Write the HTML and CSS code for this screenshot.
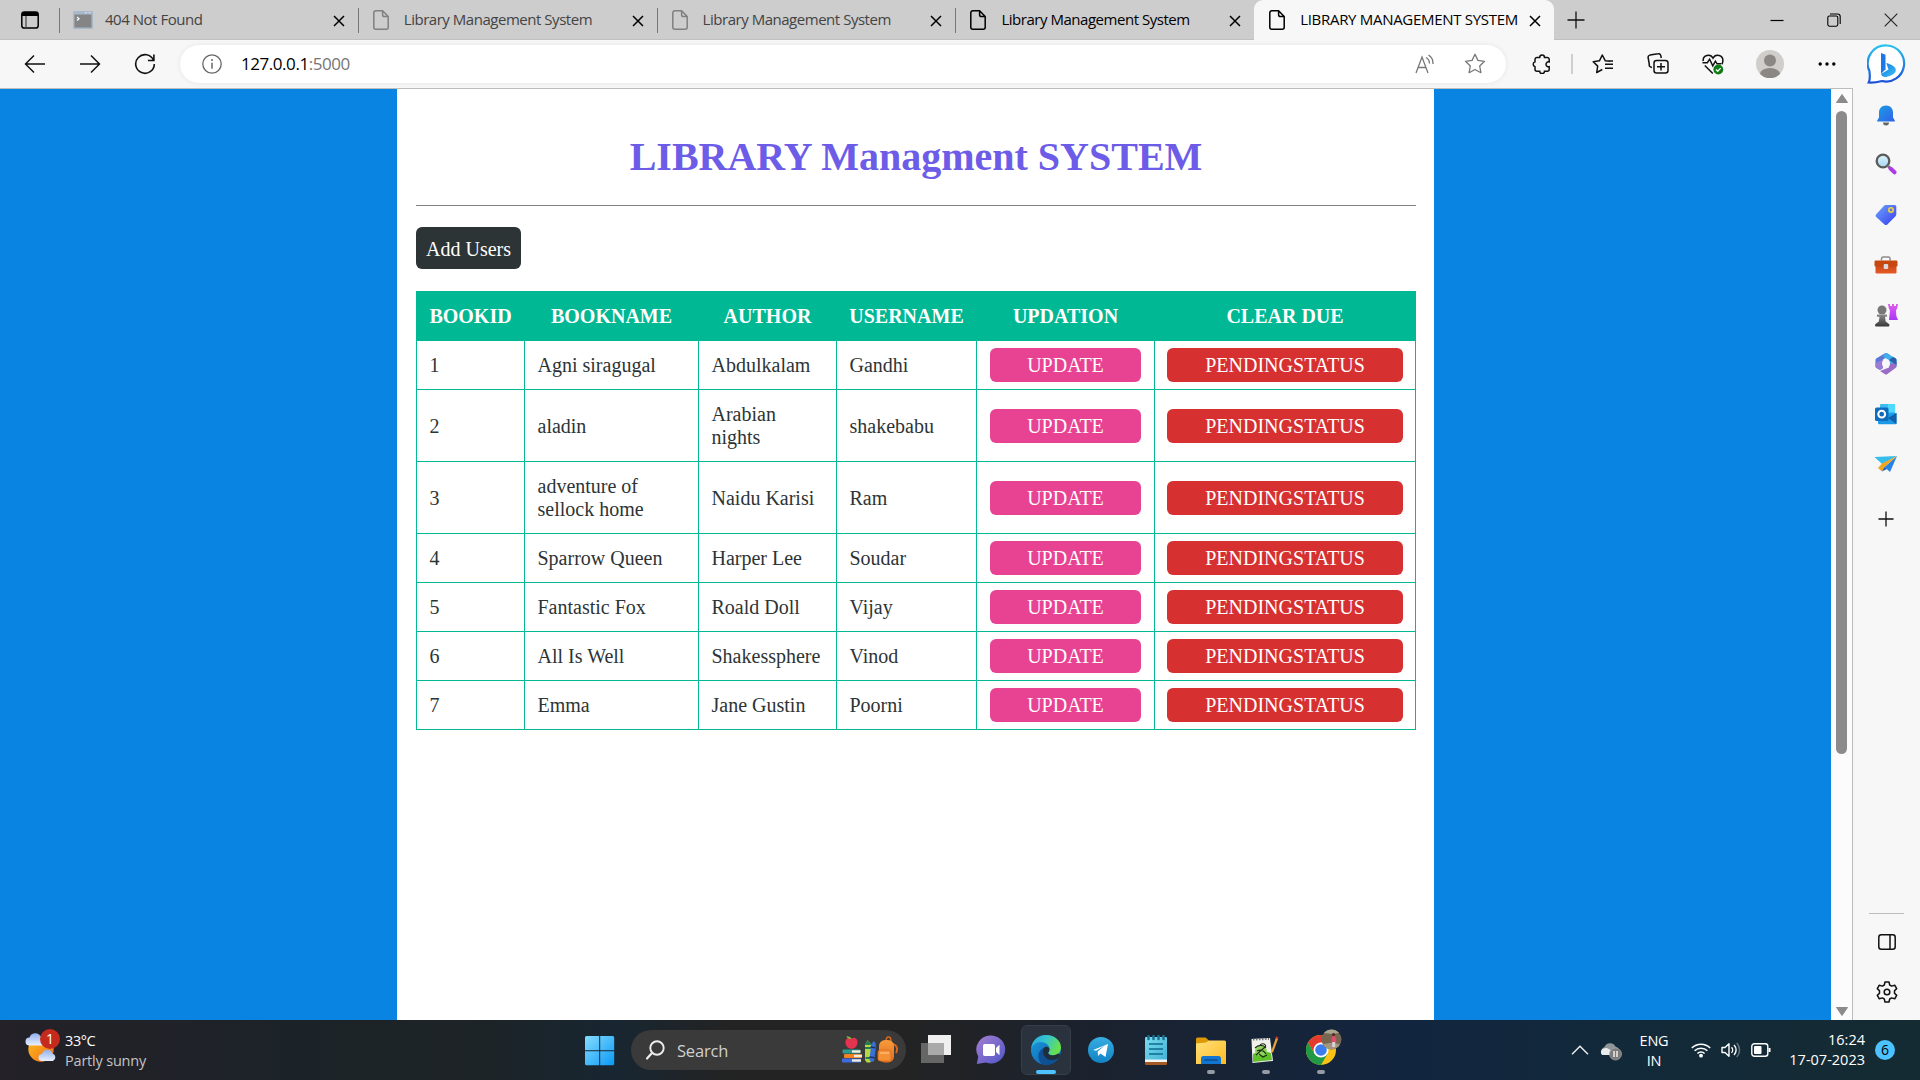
FILE: index.html
```html
<!DOCTYPE html>
<html lang="en">
<head>
<meta charset="utf-8">
<title>LIBRARY MANAGEMENT SYSTEM</title>
<link rel="stylesheet" href="styles.css">
</head>
<body>
<svg class="defs" width="0" height="0">
  <defs>
    <linearGradient id="gBell" x1="0" y1="0" x2="1" y2="1"><stop offset="0" stop-color="#1b9de2"/><stop offset="1" stop-color="#2f62ea"/></linearGradient>
    <linearGradient id="gTag" x1="0" y1="0" x2="1" y2="1"><stop offset="0" stop-color="#6aa5fb"/><stop offset="1" stop-color="#3a3df0"/></linearGradient>
    <linearGradient id="gBox" x1="0" y1="0" x2="0" y2="1"><stop offset="0" stop-color="#c4420f"/><stop offset="1" stop-color="#e65a2a"/></linearGradient>
    <linearGradient id="gPawn" x1="0" y1="0" x2="0" y2="1"><stop offset="0" stop-color="#8a8a8a"/><stop offset="1" stop-color="#383838"/></linearGradient>
    <linearGradient id="gRook" x1="0" y1="0" x2="0" y2="1"><stop offset="0" stop-color="#e35cf0"/><stop offset="1" stop-color="#a838f5"/></linearGradient>
    <linearGradient id="gBing" x1="0" y1="0" x2="0" y2="1"><stop offset="0" stop-color="#2bc3ee"/><stop offset="1" stop-color="#1b4fd8"/></linearGradient>
    <linearGradient id="gB" x1="0" y1="0" x2="1" y2="1"><stop offset="0" stop-color="#1a6fe8"/><stop offset="1" stop-color="#37c6ee"/></linearGradient>
    <linearGradient id="gWin" x1="0" y1="0" x2="1" y2="1"><stop offset="0" stop-color="#85dcff"/><stop offset="1" stop-color="#0a99f5"/></linearGradient>
    <linearGradient id="gSun" x1="0" y1="0" x2="1" y2="1"><stop offset="0" stop-color="#fcc21b"/><stop offset="1" stop-color="#f56a1c"/></linearGradient>
    <linearGradient id="gCloud" x1="0" y1="0" x2="0" y2="1"><stop offset="0" stop-color="#8fb1ef"/><stop offset="1" stop-color="#e9f0fd"/></linearGradient>
    <linearGradient id="gChat" x1="0" y1="0" x2="1" y2="1"><stop offset="0" stop-color="#a67fd0"/><stop offset="1" stop-color="#4e55c8"/></linearGradient>
    <linearGradient id="gEdgeTop" x1="0" y1="0" x2="1" y2="0.4"><stop offset="0" stop-color="#2aa4e0"/><stop offset=".5" stop-color="#35c4cf"/><stop offset="1" stop-color="#66e04f"/></linearGradient>
    <linearGradient id="gEdgeBody" x1="0" y1="0" x2="1" y2="1"><stop offset="0" stop-color="#1b9de0"/><stop offset="1" stop-color="#0c59a4"/></linearGradient>
    <linearGradient id="gTel" x1="0" y1="0" x2="0" y2="1"><stop offset="0" stop-color="#37aee2"/><stop offset="1" stop-color="#1282c4"/></linearGradient>
    <linearGradient id="gNote" x1="0" y1="0" x2="1" y2="1"><stop offset="0" stop-color="#7bdcf0"/><stop offset="1" stop-color="#3fb0d4"/></linearGradient>
    <linearGradient id="gFold" x1="0" y1="0" x2="1" y2="1"><stop offset="0" stop-color="#ffe07a"/><stop offset="1" stop-color="#fdbb22"/></linearGradient>
    <linearGradient id="gBag" x1="0" y1="0" x2="0" y2="1"><stop offset="0" stop-color="#f79a3c"/><stop offset="1" stop-color="#e36f1e"/></linearGradient>
    <linearGradient id="gLens" x1="0" y1="0" x2="0" y2="1"><stop offset="0" stop-color="#dff2fc"/><stop offset="1" stop-color="#a5d6f2"/></linearGradient>
  </defs>
  <symbol id="page" viewBox="0 0 16 20"><path d="M3 .8h6.6l5.6 5.7v10.7a2 2 0 0 1-2 2H2.800a2 2 0 0 1-2-2V2.800a2 2 0 0 1 2-2zM9.600 .8v3.900a1.800 1.800 0 0 0 1.800 1.800h3.800" fill="none" stroke="currentColor" stroke-width="1.500" stroke-linejoin="round"/></symbol>
  <symbol id="cross" viewBox="0 0 12 12"><path d="M1 1l10 10M11 1L1 11" fill="none" stroke="currentColor" stroke-width="1.500"/></symbol>
</svg>

<div class="screen">
  <header class="tabbar">
    <div class="tab-actions"><svg width="18" height="18" viewBox="0 0 18 18"><rect x=".8" y="1" width="16.400" height="16" rx="2.600" fill="none" stroke="#000" stroke-width="1.500"/><path d="M1 5V3.200A2.200 2.200 0 0 1 3.200 1h11.600A2.200 2.200 0 0 1 17 3.200V5z"/><path d="M5 5v12" stroke="#444" stroke-width="1.200"/></svg></div>
    <div class="tab dim">
      <span class="fav"><svg width="20" height="18" viewBox="0 0 20 18"><rect width="20" height="18" rx="1" fill="#a9b9cc"/><rect x="1.500" y="3.500" width="17" height="13" fill="#858585"/><path d="M4 6l2 1.800L4 9.600" fill="none" stroke="#fff" stroke-width="1.300"/><path d="M12 1.700h2M15.500 1.700h2" stroke="#dce6f2"/></svg></span>
      <span class="tab-title">404 Not Found</span><svg class="x" width="12" height="12"><use href="#cross"/></svg>
    </div>
    <div class="tab dim"><span class="fav"><svg width="16" height="20"><use href="#page"/></svg></span><span class="tab-title">Library Management System</span><svg class="x" width="12" height="12"><use href="#cross"/></svg></div>
    <div class="tab dim"><span class="fav"><svg width="16" height="20"><use href="#page"/></svg></span><span class="tab-title">Library Management System</span><svg class="x" width="12" height="12"><use href="#cross"/></svg></div>
    <div class="tab"><span class="fav"><svg width="16" height="20"><use href="#page"/></svg></span><span class="tab-title">Library Management System</span><svg class="x" width="12" height="12"><use href="#cross"/></svg></div>
    <div class="tab active"><span class="fav"><svg width="16" height="20"><use href="#page"/></svg></span><span class="tab-title caps">LIBRARY MANAGEMENT SYSTEM</span><svg class="x" width="12" height="12"><use href="#cross"/></svg></div>
    <div class="newtab"><svg width="18" height="18" viewBox="0 0 18 18"><path d="M9 .5v17M.5 9h17" stroke="#111" stroke-width="1.300"/></svg></div>
    <div class="win-controls">
      <span><svg width="14" height="14" viewBox="0 0 14 14"><path d="M.5 7.500h13" stroke="#000" stroke-width="1.200"/></svg></span>
      <span><svg width="14" height="14" viewBox="0 0 14 14"><rect x=".8" y="3" width="10" height="10.200" rx="1.600" fill="none" stroke="#000" stroke-width="1.100"/><path d="M3 1h7.500a2.700 2.700 0 0 1 2.700 2.700V11" fill="none" stroke="#000" stroke-width="1.100"/></svg></span>
      <span><svg width="14" height="14" viewBox="0 0 14 14"><path d="M.7.7l12.600 12.600M13.300.7L.7 13.300" stroke="#222" stroke-width="1.100"/></svg></span>
    </div>
  </header>

  <div class="toolbar">
    <div class="nav">
      <span><svg width="22" height="20" viewBox="0 0 22 20"><path d="M10 1.500L1.500 10l8.500 8.500M1.500 10H21" fill="none" stroke="#111" stroke-width="1.500"/></svg></span>
      <span><svg width="22" height="20" viewBox="0 0 22 20"><path d="M12 1.500l8.500 8.500-8.500 8.500M20.500 10H1" fill="none" stroke="#111" stroke-width="1.500"/></svg></span>
      <span><svg width="22" height="22" viewBox="0 0 22 22"><path d="M19.500 7.200A9.300 9.300 0 1 0 20.300 11M19.900 1.500v6h-6" fill="none" stroke="#111" stroke-width="1.600"/></svg></span>
    </div>
    <div class="address">
      <svg width="20" height="20" viewBox="0 0 20 20"><circle cx="10" cy="10" r="9.200" fill="none" stroke="#666" stroke-width="1.300"/><path d="M10 8.700v6" stroke="#666" stroke-width="1.500"/><circle cx="10" cy="6" r="1" fill="#666"/></svg>
      <span class="url">127.0.0.1<i>:5000</i></span>
      <span class="read"><svg width="20" height="20" viewBox="0 0 20 20"><path d="M1 19L7 3l6 16M3.200 13.500h7.600" fill="none" stroke="#777" stroke-width="1.300"/><path d="M11 3.500a7 7 0 0 1 3.500 6M13.500 1a10 10 0 0 1 4.500 9" fill="none" stroke="#777" stroke-width="1.300"/></svg></span>
      <span class="star"><svg width="22" height="21" viewBox="0 0 22 21"><path d="M11 1.300l2.900 6.100 6.600.9-4.800 4.700 1.200 6.700-5.900-3.200-5.900 3.200 1.200-6.700L1.500 8.300l6.600-.9z" fill="none" stroke="#777" stroke-width="1.300" stroke-linejoin="round"/></svg></span>
    </div>
    <div class="tools">
      <span><svg width="20" height="20" viewBox="0 0 20 20"><path d="M5 3.400h2.700a2.400 2.400 0 0 1 4.800 0h2.700a2 2 0 0 1 2 2v2.500a2.500 2.500 0 1 0 0 4.800v2.500a2 2 0 0 1-2 2h-2.700a2.400 2.400 0 0 1-4.800 0H5a2 2 0 0 1-2-2v-2.500a2.500 2.500 0 0 1 0-4.800V5.400a2 2 0 0 1 2-2z" fill="none" stroke="#111" stroke-width="1.500"/></svg></span>
      <b class="rule"></b>
      <span><svg width="22" height="20" viewBox="0 0 22 20"><path d="M18 7.300l-4.800-.6L10.300 1 7.400 6.800 1.200 7.700l4.500 4.400-1 6.400 5.600-3M13 10.200h8M13 14.300h8M15 7h6" fill="none" stroke="#111" stroke-width="1.500" stroke-linejoin="round"/></svg></span>
      <span><svg width="22" height="21" viewBox="0 0 22 21"><rect x="7" y="7.500" width="14" height="12.500" rx="2.500" fill="none" stroke="#111" stroke-width="1.500"/><path d="M14 10v7.500M10 13.800h8M5 14.500l-1.200-.4a2.300 2.300 0 0 1-1.500-2.800L1.200 5a2.400 2.400 0 0 1 1.700-2.900L11 .8a2.400 2.400 0 0 1 2.800 1.800L14.300 5" fill="none" stroke="#111" stroke-width="1.500"/></svg></span>
      <span><svg width="22" height="22" viewBox="0 0 22 22"><path d="M1.200 8.200a5.200 5.200 0 0 1 9.800-3 5.200 5.200 0 0 1 9.800 3c0 1-.3 2-1 3M2.800 12.500l8 8M.5 9.700h4.800l2.300-3.500 3.200 6.600 2.600-4.600 1.700 2.600h4" fill="none" stroke="#111" stroke-width="1.500"/><circle cx="16.300" cy="16.500" r="4.900" fill="#0f7b17"/><path d="M14 16.500l1.700 1.800 3-3.200" fill="none" stroke="#fff" stroke-width="1.300"/></svg></span>
      <span class="avatar"><svg width="28" height="28" viewBox="0 0 28 28"><circle cx="14" cy="14" r="14" fill="#d0cecb"/><circle cx="14" cy="10.500" r="6" fill="#8a8784"/><path d="M4 24a10 6 0 0 1 20 0 14 14 0 0 1-20 0z" fill="#8a8784"/></svg></span>
      <span class="more"><svg width="18" height="4" viewBox="0 0 18 4"><circle cx="2.200" cy="2" r="1.700"/><circle cx="9" cy="2" r="1.700"/><circle cx="15.800" cy="2" r="1.700"/></svg></span>
      <span class="bing"><svg width="40" height="40" viewBox="0 0 40 40"><path d="M20 1.500A18 18 0 1 1 15 37c-4 1-8 2-13.300 1.500C3.500 35 3 32 2.400 27A18 18 0 0 1 20 1.500z" fill="#fff" stroke="url(#gBing)" stroke-width="2.200"/><path d="M14 9l4.500 1.800v14.500L14 30z" fill="#1c77ea"/><path d="M14 30l7.500-4.500-2.200-6.500c5 1.500 9.500 3.500 9.500 7 0 4-5 5.700-9.500 7-2.800.4-4.800-.8-5.300-3z" fill="url(#gB)"/></svg></span>
    </div>
  </div>

  <div class="middle">
    <main class="viewport">
      <div class="container">
        <h1>LIBRARY Managment SYSTEM</h1>
        <hr>
        <a class="btn add">Add Users</a>
        <table>
          <colgroup><col class="c1"><col class="c2"><col class="c3"><col class="c4"><col class="c5"><col class="c6"></colgroup>
          <thead><tr><th>BOOKID</th><th>BOOKNAME</th><th>AUTHOR</th><th>USERNAME</th><th>UPDATION</th><th>CLEAR DUE</th></tr></thead>
          <tbody>
            <tr><td>1</td><td>Agni siragugal</td><td>Abdulkalam</td><td>Gandhi</td><td class="act"><a class="btn edit">UPDATE</a></td><td class="act"><a class="btn due">PENDINGSTATUS</a></td></tr>
            <tr><td>2</td><td>aladin</td><td>Arabian<br>nights</td><td>shakebabu</td><td class="act"><a class="btn edit">UPDATE</a></td><td class="act"><a class="btn due">PENDINGSTATUS</a></td></tr>
            <tr><td>3</td><td>adventure of<br>sellock home</td><td>Naidu Karisi</td><td>Ram</td><td class="act"><a class="btn edit">UPDATE</a></td><td class="act"><a class="btn due">PENDINGSTATUS</a></td></tr>
            <tr><td>4</td><td>Sparrow Queen</td><td>Harper Lee</td><td>Soudar</td><td class="act"><a class="btn edit">UPDATE</a></td><td class="act"><a class="btn due">PENDINGSTATUS</a></td></tr>
            <tr><td>5</td><td>Fantastic Fox</td><td>Roald Doll</td><td>Vijay</td><td class="act"><a class="btn edit">UPDATE</a></td><td class="act"><a class="btn due">PENDINGSTATUS</a></td></tr>
            <tr><td>6</td><td>All Is Well</td><td>Shakessphere</td><td>Vinod</td><td class="act"><a class="btn edit">UPDATE</a></td><td class="act"><a class="btn due">PENDINGSTATUS</a></td></tr>
            <tr><td>7</td><td>Emma</td><td>Jane Gustin</td><td>Poorni</td><td class="act"><a class="btn edit">UPDATE</a></td><td class="act"><a class="btn due">PENDINGSTATUS</a></td></tr>
          </tbody>
        </table>
      </div>
    </main>
    <div class="scrollbar">
      <svg width="12" height="9" viewBox="0 0 12 9"><path d="M6 .5L11.500 8.500H.5z" fill="#8b8b8b" stroke="#8b8b8b" stroke-linejoin="round"/></svg>
      <div class="thumb"></div>
      <svg width="12" height="9" viewBox="0 0 12 9"><path d="M6 8.500L.5.500h11z" fill="#8b8b8b" stroke="#8b8b8b" stroke-linejoin="round"/></svg>
    </div>
    <aside class="sidebar">
      <span><svg width="22" height="22" viewBox="0 0 22 22"><path d="M11 1.500c4.500 0 7 3.300 7 7v5l1.800 3c.3.600 0 1-.6 1H2.800c-.6 0-.9-.4-.6-1l1.800-3v-5c0-3.700 2.500-7 7-7z" fill="url(#gBell)"/><path d="M8 18.500h6a3 3 0 0 1-6 0z" fill="#666"/></svg></span>
      <span><svg width="22" height="24" viewBox="0 0 22 24"><circle cx="8" cy="8" r="6.300" fill="url(#gLens)" stroke="#5b5b5b" stroke-width="2.300"/><path d="M12.500 12.500l3 3" stroke="#777" stroke-width="2.500"/><path d="M15.500 15.500l4 3.800" stroke="#b03ae8" stroke-width="4" stroke-linecap="round"/></svg></span>
      <span><svg width="22" height="22" viewBox="0 0 22 22"><path d="M11 1h8.500a1.800 1.800 0 0 1 1.800 1.800V10c0 1-.3 1.700-1 2.400l-8 8c-.9.800-2 .8-2.800 0L1.200 13c-.8-.9-.8-1.900 0-2.700l7.600-8.200C9.500 1.300 10 1 11 1z" fill="url(#gTag)"/><circle cx="16" cy="6" r="2.200" fill="#6575ea" stroke="#f2d338" stroke-width="1.600"/></svg></span>
      <span><svg width="24" height="20" viewBox="0 0 24 20"><path d="M7.500 5.500V3.700A1.800 1.800 0 0 1 9.300 2h5a1.800 1.800 0 0 1 1.800 1.700v1.800" fill="none" stroke="#8c8c8c" stroke-width="1.500"/><rect x="1.500" y="8" width="21" height="10.500" rx="1.300" fill="url(#gBox)"/><rect x=".5" y="5.500" width="23" height="6" rx="1.300" fill="#c5460f"/><rect x="9.700" y="9" width="4.500" height="5" rx="1" fill="#d9d9d9"/></svg></span>
      <span><svg width="24" height="24" viewBox="0 0 24 24"><path d="M14 1h2v2h2V1h2v2h2V1h2l-1 5-1 1 .3 6 1.700 4h-9l1-10-1-1z" fill="url(#gRook)"/><circle cx="8" cy="7" r="4.500" fill="#777"/><path d="M3 11.500h10v2.200h-2l.7 4.800 3.300 2.500c.8.800.5 2.500-.5 2.500H2c-1 0-1.300-1.700-.5-2.500l3.300-2.500.7-4.800H3z" fill="url(#gPawn)"/></svg></span>
      <span><svg width="22" height="24" viewBox="0 0 22 24"><path d="M10 1.200a2 2 0 0 1 2 0L15 3 8 7.500V16l-3 2-3.500-2A2 2 0 0 1 .5 14.300V8a2 2 0 0 1 1-1.700z" fill="#5c78d6"/><path d="M.5 11L8 7.500V16l-3 2-3.500-2A2 2 0 0 1 .5 14.300z" fill="#9a7bd6"/><path d="M11 .9a2 2 0 0 1 1 .3l8.500 5a2 2 0 0 1 1 1.800v7L14 12V8l-3-1.500L8 4z" fill="#3fb0ee"/><path d="M21.500 10v4.300a2 2 0 0 1-1 1.700L12 22.300a2 2 0 0 1-2 0L5 19l9-3.500V12z" fill="#9a6cc8"/><path d="M14 8l7.500 5V8a2 2 0 0 0-1-1.700L18 5z" fill="#2c5fa8"/><circle cx="11" cy="11.500" r="4" fill="#f7f7f7"/></svg></span>
      <span><svg width="22" height="22" viewBox="0 0 22 22"><rect x="5" y="1" width="15" height="13" rx="1" fill="#3dbcf2"/><rect x="13" y="1" width="7" height="8" fill="#50d9ff"/><path d="M3 11l18.500-1v10a1.200 1.200 0 0 1-1.200 1.200H4.200A1.200 1.200 0 0 1 3 20z" fill="#1a9ae6"/><path d="M21.500 10v11L13 15z" fill="#115fa8"/><rect x="0" y="4.500" width="13.500" height="13.500" rx="1.500" fill="#0f6cbd"/><circle cx="6.700" cy="11.200" r="3.400" fill="none" stroke="#fff" stroke-width="2"/></svg></span>
      <span><svg width="24" height="20" viewBox="0 0 24 20"><path d="M.5 3L23 2 8 10z" fill="#35bdeb"/><path d="M23 2L16 18l-5.500-5z" fill="#2484e6"/><path d="M4 14L8 9.500 23 2 11 12.500l-3 5z" fill="#f2a51f"/><path d="M8 17.500l2.500-4.500 2.500 2z" fill="#1b62c4"/></svg></span>
      <span class="add-app"><svg width="16" height="16" viewBox="0 0 16 16"><path d="M8 .5v15M.5 8h15" stroke="#111" stroke-width="1.300"/></svg></span>
      <div class="side-bottom">
        <span><svg width="18" height="16" viewBox="0 0 18 16"><rect x=".8" y=".8" width="16.400" height="14.400" rx="2.500" fill="none" stroke="#111" stroke-width="1.500"/><path d="M12 1v14" stroke="#111" stroke-width="1.500"/></svg></span>
        <span><svg width="22" height="22" viewBox="0 0 22 22"><path d="M9 1h4l.7 3 2 1.100 3-.9 2 3.400L18.500 9.800v2.400l2.200 2.200-2 3.400-3-.9-2 1.100-.7 3H9l-.7-3-2-1.100-3 .9-2-3.400 2.200-2.200V9.800L1.300 7.600l2-3.400 3 .9 2-1.100z" fill="none" stroke="#111" stroke-width="1.500" stroke-linejoin="round"/><circle cx="11" cy="11" r="2.800" fill="none" stroke="#111" stroke-width="1.500"/></svg></span>
      </div>
    </aside>
  </div>

  <footer class="taskbar">
    <div class="weather">
      <div class="weather-icon"><svg width="32" height="36" viewBox="0 0 32 36"><circle cx="16" cy="21" r="12.700" fill="url(#gSun)"/><path d="M4.500 17.500a4 4 0 0 1 0-8 6 6 0 0 1 11-1 4.500 4.500 0 0 1 2.500 9z" fill="url(#gCloud)"/><path d="M17 33a3.500 3.500 0 0 1 0-7 5.500 5.500 0 0 1 10.500-.5 4 4 0 0 1 .5 7.500z" fill="url(#gCloud)"/></svg><b class="alert">1</b></div>
      <div class="weather-text"><div>33°C</div><div class="cond">Partly sunny</div></div>
    </div>
    <div class="apps">
      <span class="start"><svg width="30" height="30" viewBox="0 0 30 30"><path d="M1.500 0H14.200V14.200H0V1.500A1.500 1.500 0 0 1 1.500 0zM15.200 0h12.500a1.500 1.500 0 0 1 1.500 1.500v12.700h-14zM0 15.200h14.200v14H1.500A1.500 1.500 0 0 1 0 27.700zM15.200 15.200h14v12.500a1.500 1.500 0 0 1-1.500 1.500H15.200z" fill="url(#gWin)"/></svg></span>
      <div class="search">
        <svg width="19" height="20" viewBox="0 0 19 20"><circle cx="11" cy="8" r="6.700" fill="none" stroke="#ededed" stroke-width="1.900"/><path d="M6 13l-5 5.500" stroke="#ededed" stroke-width="2.200" stroke-linecap="round"/></svg>
        <span class="search-text">Search</span>
        <svg width="57" height="28" viewBox="0 0 57 28"><path d="M10.500 2.500c3-2 6.500.5 6 4.500-.4 3.500-3 6-6 5.700-3 .3-5.600-2.200-6-5.700-.5-4 3-6.500 6-4.500z" fill="#e23350"/><path d="M10.500 3C10 1 8 .5 5.500.3c.5 2 2.500 3 5 2.700z" fill="#7bc043"/><rect x="1.500" y="13.500" width="18" height="4" rx="1" fill="#2a9c90"/><rect x="11" y="14.300" width="8.500" height="2.400" fill="#f1eddc"/><rect x="3" y="18" width="18" height="4" rx="1" fill="#f08223"/><rect x="13" y="18.800" width="8" height="2.400" fill="#f1eddc"/><rect x="1" y="22.500" width="19" height="4" rx="1" fill="#3f6be0"/><rect x="11" y="23.300" width="9" height="2.400" fill="#f1eddc"/><path d="M26.500 4L24 9v15l1.700 2.500h3.600L31 24V9z" fill="#b5d93c"/><path d="M26.500 4L24 9h7zM24 11h6v2h-6zM24.500 21h6v2h-6z" fill="#22795a"/><path d="M32.500 5L30 9l-1.500 15 1.500 2 3-.8L35 11l-.5-4z" fill="#3a6fd8"/><path d="M29.500 11l5 .7M28.500 21l5 .7" stroke="#1c3260" stroke-width="1.500"/><path d="M45 5.500c0-6 5-6 5 0" fill="none" stroke="#d9661b" stroke-width="1.500"/><path d="M52 8c4 1 5 5 3 9" fill="none" stroke="#d9661b" stroke-width="2"/><rect x="38" y="4" width="15" height="22.500" rx="6" fill="url(#gBag)"/><rect x="37" y="14" width="13" height="11" rx="2.500" fill="#f49036" stroke="#d96d20" stroke-width=".8"/><path d="M39 17h9" stroke="#ffcf98"/></svg>
      </div>
      <span class="app"><svg width="30" height="30" viewBox="0 0 30 30"><rect y="8" width="23" height="20" fill="#666"/><rect x="7" y="0" width="23" height="20" fill="#efefef"/><path d="M7 8h16v12H7z" fill="#a9a9a9"/></svg></span>
      <span class="app"><svg width="30" height="30" viewBox="0 0 30 30"><path d="M15.500.5a14 14 0 1 1-5.500 27L.8 29l1.500-7.500a14 14 0 0 1 13.200-21z" fill="url(#gChat)"/><rect x="7" y="9" width="12" height="12" rx="1.700" fill="#fff"/><path d="M20 13l3.500-3.300v10.600L20 17z" fill="#fff"/></svg></span>
      <span class="app open current"><svg width="30" height="30" viewBox="0 0 30 30"><circle cx="15" cy="15" r="15" fill="url(#gEdgeBody)"/><path d="M.2 13.500C1 5 7.500 0 15 0c8.500 0 15 5.500 15 12.500 0 5-3.500 7.800-7.300 7.800-3.200 0-5.500-1.300-5.500-2.300 0-.8 1.300-1.500 1.300-4C18.500 10 14.500 7 9.500 7 5 7 1.500 10 .2 13.500z" fill="url(#gEdgeTop)"/><path d="M11 29.500C6 25 6 16 12.500 13c-1.500 8 4.500 13.500 15 9.500-3 5.500-9.500 8.700-16.500 7z" fill="#0f4f94"/><path d="M12.500 13c3-2.600 6-.6 6 1.300 0 2.200-1.300 2.900-1.300 3.700 0 2.800 6.500 3.300 10 .6l2 1.500-1.500 3c-8 5-18-.1-15.200-10.100z" fill="#202e3b"/></svg></span>
      <span class="app"><svg width="26" height="26" viewBox="0 0 26 26"><circle cx="13" cy="13" r="13" fill="url(#gTel)"/><path d="M5 13L20 7l-2.500 13-5-3.500-2.500 2.500-.3-4.500 7-6-8.500 5.300z" fill="#fff"/></svg></span>
      <span class="app"><svg width="24" height="30" viewBox="0 0 24 30"><rect x="1" y="2" width="22" height="26" rx="1" fill="url(#gNote)"/><path d="M1 24.500h22v2.500H1z" fill="#f4f4f4"/><path d="M1 27h22v2a1 1 0 0 1-1 1H2a1 1 0 0 1-1-1z" fill="#a55a26"/><path d="M5 9h14M5 14h14M5 19h14" stroke="#0c6b8e" stroke-width="1.700"/><path d="M4.500 1v3M9.500 1v3M14.500 1v3M19.500 1v3" stroke="#1b6f90" stroke-width="2.500" stroke-linecap="round"/></svg></span>
      <span class="app open"><svg width="30" height="27" viewBox="0 0 30 27"><path d="M0 2A1.500 1.500 0 0 1 1.500.5h8L13 3.500V10H0z" fill="#dc9a06"/><path d="M0 6.500l10-1 3-2h15.500A1.500 1.500 0 0 1 30 5v22H0z" fill="url(#gFold)"/><path d="M5 27v-5.500A2.500 2.500 0 0 1 7.500 19h15a2.500 2.500 0 0 1 2.500 2.500V27z" fill="#1275cf"/><path d="M8.500 23h13" stroke="#0c4f94" stroke-width="1.500"/></svg></span>
      <span class="app open"><svg class="npp" width="30" height="28" viewBox="0 0 30 28"><path d="M1.500 3L20 2l3 23-20.500 2z" fill="#f1f1ec"/><path d="M3 18c6-3 12-3 18-1l1 7-19 2z" fill="#5fc02a"/><path d="M3 3.500l16-.5" stroke="#777" stroke-width="2" stroke-dasharray="1.500 1.500"/><ellipse cx="11" cy="15" rx="6" ry="5" fill="#8ed45a"/><path d="M5 12c3-3 8-4 11 0M7 15c4-2 7 0 9 3M6 19l9-8M10 9c4-3 8 1 4 3M9 18l4 3 4-2" stroke="#1d2b16" stroke-width="1.100" fill="none"/><path d="M26 1.500l-4.500 13-1 4 2.800-2.800L28 3z" fill="#e8a33b"/><path d="M26 1l2 1.500" stroke="#c33" stroke-width="2"/></svg></span>
      <span class="app open"><svg class="chrome" width="36" height="36" viewBox="0 0 36 36"><circle cx="15" cy="21" r="15" fill="#fbc116"/><path d="M2 13.500A15 15 0 0 1 28 13.500H15l-6.500 11.300z" fill="#e33b2e"/><path d="M2 13.500A15 15 0 0 0 15 36l6.500-11.300L8.500 24.800z" fill="#229a45"/><circle cx="15" cy="21" r="7.500" fill="#fff"/><circle cx="15" cy="21" r="5.800" fill="#3b7df0"/><circle cx="25.500" cy="10.500" r="10" fill="#786650"/><path d="M18 4a10 10 0 0 1 15 0l-7 1z" fill="#aaa58e"/><path d="M17 15.500c5-2 12-2 17 0a10 10 0 0 1-17 0z" fill="#a3967f"/><circle cx="27.500" cy="5.500" r="1.600" fill="#4a2d23"/><path d="M26 7.500h3.500l.8 5.500h-5z" fill="#e84a6d"/><path d="M26.200 13h3v5h-3z" fill="#d9d2d8"/></svg></span>
    </div>
    <div class="tray">
      <svg class="chev" width="18" height="10" viewBox="0 0 18 10"><path d="M1 9.300l8-8 8 8" fill="none" stroke="#f2f2f2" stroke-width="1.400"/></svg>
      <svg class="cloud" width="22" height="20" viewBox="0 0 22 20"><path d="M4 13.500a4 4 0 0 1 .5-7.500 6 6 0 0 1 11-.5 4.500 4.500 0 0 1 1.500 8z" fill="#8f9599"/><path d="M2.500 14a3.600 3.600 0 0 1 1-6.500C7 6 9 8 12 10l-1 4z" fill="#e9ebec"/><circle cx="15.500" cy="13" r="6" fill="#7d7a78" stroke="#aaa" stroke-width=".7"/><path d="M14 10v6M17 10v6" stroke="#fff" stroke-width="1.300"/></svg>
      <div class="lang">ENG<br>IN</div>
      <svg class="wifi" width="20" height="16" viewBox="0 0 20 16"><path d="M.8 6a13 13 0 0 1 18.400 0M3.600 8.800a9 9 0 0 1 12.800 0M6.400 11.500a5 5 0 0 1 7.200 0" fill="none" stroke="#fff" stroke-width="1.500"/><circle cx="10" cy="13.700" r="1.900" fill="#fff"/></svg>
      <svg class="sound" width="20" height="16" viewBox="0 0 20 16"><path d="M1 5.500h3L8 1.700v12.600L4 10.500H1z" fill="none" stroke="#fff" stroke-width="1.400" stroke-linejoin="round"/><path d="M10.500 5.200a4 4 0 0 1 0 5.600M13 3a7 7 0 0 1 0 10" fill="none" stroke="#fff" stroke-width="1.400"/><path d="M15.700 1a10 10 0 0 1 0 14" fill="none" stroke="#697880" stroke-width="1.400"/></svg>
      <svg class="batt" width="20" height="14" viewBox="0 0 20 14"><rect x=".8" y=".8" width="16" height="12.400" rx="2.500" fill="none" stroke="#fff" stroke-width="1.400"/><rect x="3" y="3" width="7.500" height="8" rx="1" fill="#fff"/><path d="M18.500 5v4" stroke="#fff" stroke-width="2"/></svg>
      <div class="clock">16:24<br>17-07-2023</div>
      <b class="count">6</b>
    </div>
  </footer>
</div>
</body>
</html>
```
FILE: styles.css
```css
* { box-sizing: border-box; }
body { margin: 0; font-family: "Open Sans", "Noto Sans", sans-serif; overflow: hidden; }
svg { display: block; flex: none; }
.defs { position: absolute; }
.screen { width: 1920px; height: 1080px; display: flex; flex-direction: column; background: #f7f7f7; }

/* tab strip */
.tabbar { height: 40px; flex: none; display: flex; background: #cdcdcd; border-bottom: 1px solid #c0c0c0; }
.tab-actions { width: 59px; padding: 11px 0 0 21px; }
.tab { width: 298.800px; flex: none; height: 39px; display: flex; align-items: center; padding: 0 13px 0 14px; font-size: 15px; color: #000; background: linear-gradient(#777, #777) 0 8px / 1px 25px no-repeat; }
.tab.dim .tab-title { color: #444; }
.tab.dim .fav { color: #808080; }
.fav { width: 32px; flex: none; }
.tab:not(:nth-child(2)) .fav { padding-left: 1px; }
.tab-title { flex: 1; white-space: nowrap; letter-spacing: -0.470px; padding-bottom: 1px; }
.tab-title.caps { letter-spacing: -0.300px; }
.x { margin-top: 2px; }
.tab.active { height: 40px; width: 300px; background: #f7f7f7; border-radius: 9px 9px 0 0; padding-bottom: 1px; }
.newtab { padding: 11px 0 0 13px; flex: 1; }
.win-controls { display: flex; align-items: center; padding-right: 1px; }
.win-controls span { width: 57px; display: grid; place-items: center; }

/* toolbar */
.toolbar { height: 48px; flex: none; display: flex; align-items: center; padding-bottom: 1px; }
.nav { display: flex; padding-left: 7px; width: 180px; }
.nav span { width: 55px; display: grid; place-items: center; }
.address { width: 1326px; height: 38px; border-radius: 19px; background: #fff; box-shadow: 0 0 5px #e4e4e4; display: flex; align-items: center; padding: 0 20px 0 22px; }
.url { flex: 1; padding-left: 19px; font-size: 17px; letter-spacing: -0.450px; color: #000; }
.url i { font-style: normal; color: #767676; }
.read { margin-right: 29px; }
.tools { display: flex; align-items: center; padding-left: 8px; }
.tools span { width: 55px; display: grid; place-items: center; }
.rule { width: 2px; height: 20px; background: #cfcfcf; margin: 0 2px; }
.tools .avatar { width: 59px; }
.tools .more { width: 56px; }
.tools .bing { width: 64px; }

/* browser content */
.middle { flex: 1; min-height: 0; display: flex; }
.viewport { width: 1831px; background: #0984e3; border-top: 1px solid #bdbdbd; }
.container { width: 1037px; height: 100%; margin-left: 397px; background: #fff; padding: 0 18px 0 19px; font-family: "Liberation Serif", "Times New Roman", serif; font-size: 20px; line-height: 23px; color: #2d3436; }
h1 { margin: 0; padding-top: 45px; height: 116px; font-size: 40px; line-height: 46px; text-align: center; color: #6c5ce7; }
hr { margin: 0 0 21px; border: 0; height: 1px; background: #808080; }
.btn { display: block; color: #fff; border-radius: 6px; text-align: center; }
.add { width: 105px; height: 42px; line-height: 44px; background: #2d3436; margin-bottom: 22px; }
table { width: 999px; table-layout: fixed; border-collapse: collapse; }
.c1 { width: 108px; } .c2 { width: 174px; } .c3 { width: 138px; } .c4 { width: 140px; } .c5 { width: 178px; } .c6 { width: 261px; }
th, td { border: 1px solid #00b894; padding: 13px 0 12px 12.500px; text-align: left; white-space: nowrap; }
th { background: #00b894; color: #fff; text-align: center; padding-left: 0; }
td.act { padding: 0 13px; }
td.act:last-child { padding: 0 12px; }
.edit, .due { height: 34px; line-height: 35px; }
.edit { background: #e84393; }
.due { background: #d63031; }
.scrollbar { width: 22px; border: solid #bdbdbd; border-width: 1px 1px 0 0; background: #fcfcfc; display: flex; flex-direction: column; align-items: center; padding: 5px 0 4px; }
.thumb { width: 11px; height: 643px; border-radius: 6px; background: #8b8b8b; margin: 8px 0 auto; }
.sidebar { width: 67px; display: flex; flex-direction: column; padding: 2px 1px 0 0; }
.sidebar span { height: 49.900px; display: grid; place-items: center; }
.sidebar .add-app { margin-top: 5px; }
.side-bottom { margin: auto 15px 0 16px; border-top: 1px solid #bdbdbd; padding: 3px 0 3px; }

/* taskbar */
.taskbar { height: 60px; flex: none; display: flex; color: #fff; background: linear-gradient(90deg, #242128 0, #1c2328 15%, #1d2326 24%, #182631 32%, #232323 38%, #232323 47%, #1b222e 57%, #12253f 73%, #12293a 84%, #152b32 100%); }
.weather { width: 585px; display: flex; padding: 8px 0 0 25px; }
.weather-icon { position: relative; width: 40px; }
.alert { position: absolute; left: 15px; top: 1px; width: 20px; height: 20px; border-radius: 50%; background: #c42b1c; font: 14px/20px "Open Sans", sans-serif; text-align: center; }
.weather-text { font-size: 14.500px; line-height: 20px; padding-top: 3px; letter-spacing: -0.400px; }
.cond { color: #c4c4c4; letter-spacing: -0.200px; }
.apps { display: flex; }
.start { width: 46px; padding-top: 16px; }
.search { width: 275px; height: 40px; margin: 10px 2px 0 0; border-radius: 20px; background: #3a3a3a; display: flex; align-items: center; padding: 0 8px 0 15px; }
.search-text { flex: 1; padding-left: 12px; font-size: 16.500px; letter-spacing: -0.200px; color: #d0d0d0; }
.app { width: 50px; height: 50px; margin: 5px 5px 0 0; border-radius: 6px; display: grid; place-items: center; position: relative; }
.search + .app { margin-left: 3px; }
.open::after { content: ""; position: absolute; bottom: 1px; left: 21px; width: 8px; height: 4px; border-radius: 2px; background: #959ba5; }
.current { background: #29323d; border: 1px solid #353e49; }
.current::after { left: 14px; width: 20px; bottom: 0; background: #4cc2ff; }
.npp { margin-right: 2px; }
.chrome { margin: -6px 0 0 6px; }
.tray { margin-left: auto; display: flex; align-items: center; padding-right: 25px; font-size: 14.500px; line-height: 20px; }
.lang { width: 40px; padding-top: 1px; text-align: center; letter-spacing: -0.200px; }
.chev { margin-right: 11px; }
.cloud { margin: 2px 12px 0 0; }
.wifi { margin-left: 17px; }
.sound { margin-left: 10px; }
.batt { margin-left: 10px; }
.clock { width: 94px; text-align: right; letter-spacing: 0; }
.count { width: 20px; height: 20px; margin-left: 10px; border-radius: 50%; background: #4cc2ff; color: #000; font: 14px/20px "Open Sans", sans-serif; text-align: center; }
```
